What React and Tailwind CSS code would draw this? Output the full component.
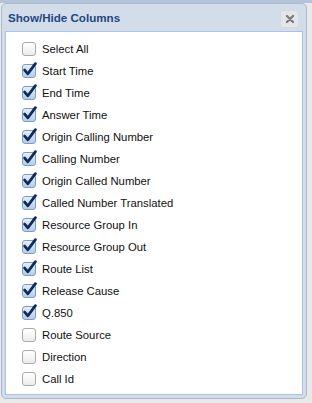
import React from 'react';

const columns = [
  { label: 'Select All', checked: false },
  { label: 'Start Time', checked: true },
  { label: 'End Time', checked: true },
  { label: 'Answer Time', checked: true },
  { label: 'Origin Calling Number', checked: true },
  { label: 'Calling Number', checked: true },
  { label: 'Origin Called Number', checked: true },
  { label: 'Called Number Translated', checked: true },
  { label: 'Resource Group In', checked: true },
  { label: 'Resource Group Out', checked: true },
  { label: 'Route List', checked: true },
  { label: 'Release Cause', checked: true },
  { label: 'Q.850', checked: true },
  { label: 'Route Source', checked: false },
  { label: 'Direction', checked: false },
  { label: 'Call Id', checked: false },
  { label: 'Other Leg Id', checked: false },
];

function Box({ checked }) {
  if (checked) {
    return (
      <span className="relative w-[14px] h-[14px] rounded-[3px] border border-[#7f9dc4] bg-gradient-to-b from-[#e4eefa] to-[#b4cdec] shrink-0">
        <svg viewBox="0 0 14 14" className="absolute -left-[1px] -top-[3px] w-[15px] h-[15px]">
          <path d="M2.5 7.5 L5.5 11 L12.5 1.5" fill="none" stroke="#0e2b5c" strokeWidth="2.6" strokeLinecap="round" strokeLinejoin="round" />
        </svg>
      </span>
    );
  }
  return (
    <span className="w-[14px] h-[14px] rounded-[3px] border border-[#a9a9a9] bg-gradient-to-b from-white to-[#ececec] shrink-0" />
  );
}

export default function App() {
  return (
    <div className="w-[312px] h-[403px] bg-[#e9e9e9] overflow-hidden" style={{ fontFamily: '"Liberation Sans", Arial, sans-serif' }}>
      <div className="h-[3px] bg-[#b4c4d8]" />
      <div className="ml-[1px] w-[306px] h-[396px] rounded-[5px] border border-[#a9b9cf] bg-[#d3dde9] flex flex-col px-[3px] pb-[3px]">
        <div className="h-[27px] flex items-center justify-between pl-[3px] pr-[4px] pt-[1px]">
          <span className="text-[11.6px] font-bold text-[#1d4785]">Show/Hide Columns</span>
          <button className="w-[19px] h-[18px] rounded-[3px] bg-[#e4e6e9] border border-[#d6d9dd] flex items-center justify-center mt-[2px]">
            <svg viewBox="0 0 10 10" className="w-[10px] h-[10px]">
              <path d="M2 2 L8 8 M8 2 L2 8" stroke="#7c7c7c" strokeWidth="2.4" strokeLinecap="round" />
            </svg>
          </button>
        </div>
        <div className="flex-1 bg-white border border-[#a8c3e8] overflow-hidden pt-[6px] pl-[16px]">
          {columns.map((c) => (
            <label key={c.label} className="h-[22px] flex items-center gap-[6px] text-[11.3px] text-[#111]">
              <Box checked={c.checked} />
              <span>{c.label}</span>
            </label>
          ))}
        </div>
      </div>
    </div>
  );
}
